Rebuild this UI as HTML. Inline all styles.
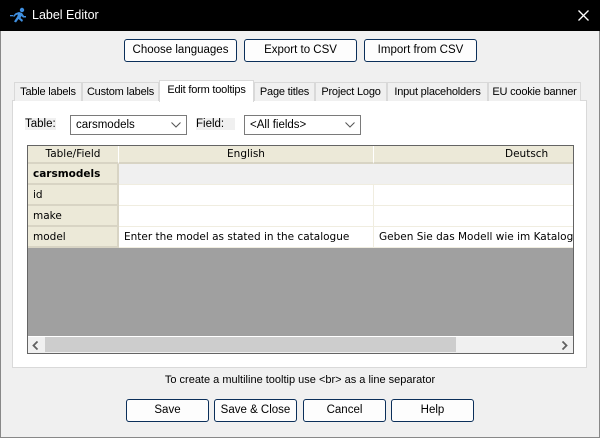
<!DOCTYPE html>
<html><head><style>
*{box-sizing:border-box;margin:0;padding:0}
body{width:600px;height:438px;overflow:hidden;background:#f0f0f0;font-family:"Liberation Sans",sans-serif;font-size:12px;color:#000;position:relative}
.a{position:absolute}
.win{left:0;top:0;width:600px;height:438px;border:1px solid #888;border-top:none}
.title{left:0;top:0;width:600px;height:31px;background:#000;color:#fff;font-size:12.5px}
.btn{position:absolute;border:1px solid #0b2f5a;border-radius:3px;background:#fdfdfd;text-align:center;line-height:21px;font-size:11.5px;white-space:nowrap}
.tab{position:absolute;top:82px;height:19px;border:1px solid #d9d9d9;border-bottom:none;background:#f0f0f0;line-height:18px;text-align:center;font-size:11px;white-space:nowrap;overflow:hidden;letter-spacing:-0.2px}
.combo{position:absolute;height:20px;border:1px solid #7a7a7a;background:#fff;line-height:18px;padding-left:5px;font-size:11.5px}
.combo svg{position:absolute;right:5px;top:6px}
.g{font-family:"DejaVu Sans",sans-serif;font-size:10.5px}
.c{position:absolute;border-right:1px solid #f0ede0;border-bottom:1px solid #f0ede0;line-height:20px;padding-left:5px;white-space:nowrap;overflow:hidden}
.h{background:#ece9d8;border-right:1px solid #fff;border-bottom:2px solid #d8d4c4;text-align:center;padding:0;line-height:16px}
.f{background:#ece9d8;border-right:2px solid #d8d4c4;border-bottom:2px solid #d8d4c4}
</style></head><body>
<div class="a win"></div>
<div class="a title">
<svg class="a" style="left:10px;top:7px" width="17" height="16" viewBox="0 0 17 16"><g fill="#3f8fe0"><circle cx="12" cy="3" r="2.2"/><path d="M9 5 L12 6 L14 9 L16 9 L16 10.5 L13 10.5 L11.5 9 L10.5 11 L13 13 L12 15 L8.5 12 L6 15.5 L4 14.5 L7 10 L8 7.5 L6 8 L4 10 L3 9 L5.5 6.3 Z"/><rect x="0" y="8" width="3" height="1.3"/></g></svg>
<span class="a" style="left:32px;top:8px">Label Editor</span>
<svg class="a" style="left:578px;top:10px" width="11" height="11"><path d="M0.5 0.5L10.5 10.5M10.5 0.5L0.5 10.5" stroke="#fff" stroke-width="1.3"/></svg>
</div>
<div class="btn" style="left:124px;top:39px;width:113px;height:23px">Choose languages</div>
<div class="btn" style="left:244px;top:39px;width:113px;height:23px">Export to CSV</div>
<div class="btn" style="left:364px;top:39px;width:113px;height:23px">Import from CSV</div>

<div class="a" style="left:12px;top:100px;width:575px;height:268px;background:#fff;border:1px solid #d9d9d9"></div>
<div class="tab" style="left:14px;width:68px">Table labels</div>
<div class="tab" style="left:82px;width:77px">Custom labels</div>
<div class="tab" style="left:254px;width:61px">Page titles</div>
<div class="tab" style="left:315px;width:72px">Project Logo</div>
<div class="tab" style="left:387px;width:101px">Input placeholders</div>
<div class="tab" style="left:488px;width:93px">EU cookie banner</div>
<div class="tab" style="left:159px;top:80px;height:22px;width:95px;background:#fff;line-height:19px">Edit form tooltips</div>

<span class="a" style="left:25px;top:118px;background:#f0f0f0;font-size:11.5px">Table:</span>
<div class="combo" style="left:70px;top:115px;width:117px">carsmodels<svg width="10" height="6"><path d="M0.5 0.5L5 5L9.5 0.5" fill="none" stroke="#555"/></svg></div>
<span class="a" style="left:196px;top:118px;background:#f0f0f0;width:39px;font-size:11.5px">Field:</span>
<div class="combo" style="left:244px;top:115px;width:117px">&lt;All fields&gt;<svg width="10" height="6"><path d="M0.5 0.5L5 5L9.5 0.5" fill="none" stroke="#555"/></svg></div>

<div class="a g" style="left:27px;top:145px;width:547px;height:209px;border:1px solid #646464;background:#a0a0a0;overflow:hidden">
<div class="c h" style="left:0;top:0;width:91px;height:18px">Table/Field</div>
<div class="c h" style="left:91px;top:0;width:255px;height:18px">English</div>
<div class="c h" style="left:346px;top:0;width:210px;height:18px;padding-left:131px;text-align:left">Deutsch</div>
<div class="c f" style="left:0;top:18px;width:91px;height:21px;font-weight:bold">carsmodels</div>
<div class="c" style="left:91px;top:18px;width:460px;height:21px;background:#f0f0f0"></div>
<div class="c f" style="left:0;top:39px;width:91px;height:21px">id</div>
<div class="c" style="left:91px;top:39px;width:255px;height:21px;background:#fff"></div>
<div class="c" style="left:346px;top:39px;width:210px;height:21px;background:#fff"></div>
<div class="c f" style="left:0;top:60px;width:91px;height:21px">make</div>
<div class="c" style="left:91px;top:60px;width:255px;height:21px;background:#fff"></div>
<div class="c" style="left:346px;top:60px;width:210px;height:21px;background:#fff"></div>
<div class="c f" style="left:0;top:81px;width:91px;height:21px">model</div>
<div class="c" style="left:91px;top:81px;width:255px;height:21px;background:#fff">Enter the model as stated in the catalogue</div>
<div class="c" style="left:346px;top:81px;width:210px;height:21px;background:#fff">Geben Sie das Modell wie im Katalog</div>
<div class="a" style="left:0;top:190px;width:545px;height:17px;background:#f0f0f0;border-top:1px solid #fff"></div>
<div class="a" style="left:17px;top:191px;width:411px;height:15px;background:#cdcdcd"></div>
<svg class="a" style="left:4px;top:195px" width="7" height="9"><path d="M5.5 0.5L1.5 4.5L5.5 8.5" fill="none" stroke="#606060" stroke-width="1.8"/></svg>
<svg class="a" style="left:533px;top:195px" width="7" height="9"><path d="M1.5 0.5L5.5 4.5L1.5 8.5" fill="none" stroke="#606060" stroke-width="1.8"/></svg>
</div>

<div class="a" style="left:0;top:374px;width:600px;text-align:center;font-size:11px">To create a multiline tooltip use &lt;br&gt; as a line separator</div>
<div class="btn" style="left:126px;top:399px;width:83px;height:23px">Save</div>
<div class="btn" style="left:214px;top:399px;width:83px;height:23px">Save &amp; Close</div>
<div class="btn" style="left:303px;top:399px;width:83px;height:23px">Cancel</div>
<div class="btn" style="left:391px;top:399px;width:83px;height:23px">Help</div>
</body></html>
